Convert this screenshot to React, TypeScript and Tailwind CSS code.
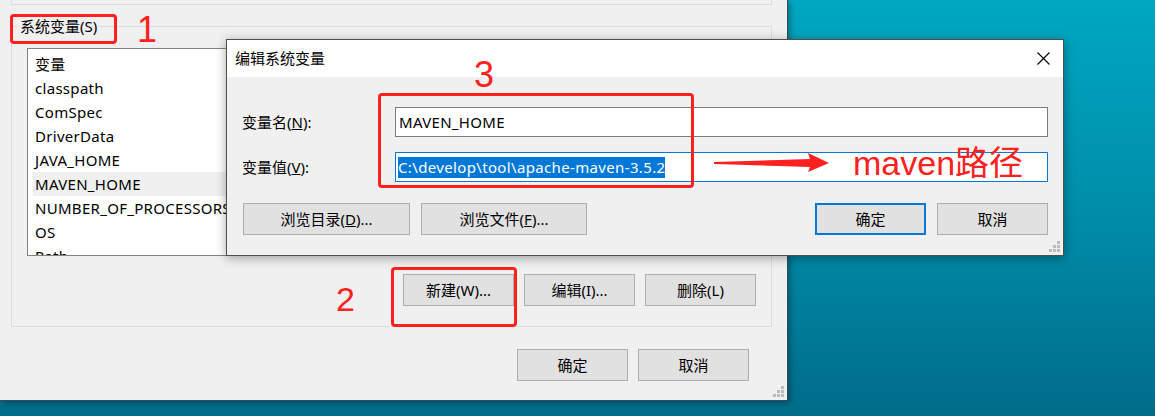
import React from 'react';

const font = "font-['Noto_Sans','Noto_Sans_CJK_SC',sans-serif]";
const red = '#ff2020';

const listItems = [
  '变量',
  'classpath',
  'ComSpec',
  'DriverData',
  'JAVA_HOME',
  'MAVEN_HOME',
  'NUMBER_OF_PROCESSORS',
  'OS',
  'Path',
];

function WinButton({
  children,
  className = '',
  primary = false,
}: {
  children: React.ReactNode;
  className?: string;
  primary?: boolean;
}) {
  return (
    <div
      className={`flex h-[32px] items-center justify-center bg-[#e1e1e1] text-[15px] text-black ${
        primary ? 'border-2 border-[#0078d7]' : 'border border-[#adadad]'
      } ${className}`}
    >
      {children}
    </div>
  );
}

function Grip() {
  return (
    <svg width="11" height="11" viewBox="0 0 11 11" className="block">
      <g fill="#bcbcbc">
        <rect x="8" y="0" width="3" height="3" />
        <rect x="4" y="4" width="3" height="3" />
        <rect x="8" y="4" width="3" height="3" />
        <rect x="0" y="8" width="3" height="3" />
        <rect x="4" y="8" width="3" height="3" />
        <rect x="8" y="8" width="3" height="3" />
      </g>
    </svg>
  );
}

function BackWindow() {
  return (
    <div className="relative flex h-[401px] w-[788px] flex-col border-r border-b border-[#2f4f5a] bg-[#f0f0f0] shadow-[2px_2px_6px_rgba(0,0,0,0.35)]">
      {/* upper group box remnant */}
      <div className="ml-[11px] mr-[15px] h-[5px] border-x border-b border-[#dcdcdc]" />

      {/* 系统变量 group */}
      <div className="relative ml-[11px] mr-[15px] mt-[21px] h-[301px] border border-[#dcdcdc]">
        <span className="absolute left-[6px] top-[-11px] bg-[#f0f0f0] px-[2px] text-[15px] leading-[20px] text-black">
          系统变量(S)
        </span>
        <div className="ml-[15px] mr-[15px] mt-[21px] h-[208px] overflow-hidden border border-[#828282] bg-white pt-[3px]">
          {listItems.map((item) => (
            <div
              key={item}
              className={`ml-[5px] h-[24px] pl-[2px] text-[15px] leading-[24px] tracking-[0.3px] text-black ${
                item === 'MAVEN_HOME' ? 'bg-[#f0f0f0]' : ''
              }`}
            >
              {item}
            </div>
          ))}
        </div>
        <div className="mt-[18px] flex justify-end gap-[10px] pr-[15px]">
          <WinButton className="w-[111px]">新建(W)...</WinButton>
          <WinButton className="w-[111px]">编辑(I)...</WinButton>
          <WinButton className="w-[111px]">删除(L)</WinButton>
        </div>
      </div>

      <div className="mt-[22px] flex justify-end gap-[10px] pr-[38px]">
        <WinButton className="w-[111px]">确定</WinButton>
        <WinButton className="w-[111px]">取消</WinButton>
      </div>

      <div className="absolute bottom-[3px] right-[3px]">
        <Grip />
      </div>
    </div>
  );
}

function EditDialog() {
  return (
    <div className="absolute left-[226px] top-[39px] flex h-[217px] w-[838px] flex-col border border-[#4d4d4d] bg-[#f0f0f0] shadow-[0_2px_10px_rgba(0,0,0,0.35)]">
      <div className="flex h-[37px] items-center justify-between bg-white pl-[8px] pr-[13px]">
        <span className="text-[15px] text-black">编辑系统变量</span>
        <svg width="13" height="13" viewBox="0 0 13 13">
          <path d="M0.5 0.5 L12.5 12.5 M12.5 0.5 L0.5 12.5" stroke="#000" strokeWidth="1.1" />
        </svg>
      </div>

      <div className="flex flex-col pl-[15px] pr-[15px] pt-[30px]">
        <div className="flex h-[30px] items-center">
          <span className="w-[153px] text-[15px] text-black">
            变量名(<span className="underline">N</span>):
          </span>
          <div className="flex h-[30px] flex-1 items-center border border-[#7a7a7a] bg-white pl-[3px] text-[15px] tracking-[0.3px] text-black">
            MAVEN_HOME
          </div>
        </div>
        <div className="mt-[15px] flex h-[30px] items-center">
          <span className="w-[153px] text-[15px] text-black">
            变量值(<span className="underline">V</span>):
          </span>
          <div className="flex h-[30px] flex-1 items-center border border-[#0078d7] bg-white pl-[2px]">
            <span className="bg-[#0078d7] text-[15px] leading-[21px] tracking-[0.35px] text-white">
              C:\develop\tool\apache-maven-3.5.2
            </span>
          </div>
        </div>
        <div className="mt-[21px] flex items-center">
          <WinButton className="ml-[1px] w-[167px]">
            浏览目录(<span className="underline">D</span>)...
          </WinButton>
          <WinButton className="ml-[11px] w-[166px]">
            浏览文件(<span className="underline">F</span>)...
          </WinButton>
          <WinButton primary className="ml-auto w-[111px]">
            确定
          </WinButton>
          <WinButton className="ml-[11px] w-[111px]">取消</WinButton>
        </div>
      </div>

      <div className="absolute bottom-[3px] right-[3px]">
        <Grip />
      </div>
    </div>
  );
}

function Annotations() {
  return (
    <div>
      {/* red boxes */}
      <div className="absolute left-[10px] top-[14px] h-[30px] w-[107px] rounded-[4px] border-[3px] border-[#ff2020]" />
      <div className="absolute left-[378px] top-[93px] h-[95px] w-[316px] rounded-[4px] border-[3px] border-[#ff2020]" />
      <div className="absolute left-[391px] top-[267px] h-[60px] w-[126px] rounded-[4px] border-[3px] border-[#ff2020]" />

      {/* numbers */}
      <span className="absolute left-[137px] top-[10px] font-['Liberation_Sans',sans-serif] text-[36px] leading-[40px] text-[#ff2020]">
        1
      </span>
      <span className="absolute left-[336px] top-[280px] font-['Liberation_Sans',sans-serif] text-[34px] leading-[38px] text-[#ff2020]">
        2
      </span>
      <span className="absolute left-[474px] top-[55px] font-['Liberation_Sans',sans-serif] text-[36px] leading-[40px] text-[#ff2020]">
        3
      </span>

      {/* arrow */}
      <svg className="absolute left-[714px] top-[152px]" width="116" height="22" viewBox="0 0 116 22">
        <polygon points="0,10 96,7 94,1 115,11 94,20 96,15 0,12" fill={red} />
      </svg>

      <span className="absolute left-[853px] top-[143px] font-['Liberation_Sans','Noto_Sans_CJK_SC',sans-serif] text-[34px] leading-[40px] text-[#ff2020]">
        maven路径
      </span>
    </div>
  );
}

export default function App() {
  return (
    <div
      className={`relative h-[416px] w-[1155px] overflow-hidden bg-gradient-to-b from-[#00a7c1] via-[#008eaa] to-[#006c8a] ${font}`}
    >
      <BackWindow />
      <EditDialog />
      <Annotations />
    </div>
  );
}
